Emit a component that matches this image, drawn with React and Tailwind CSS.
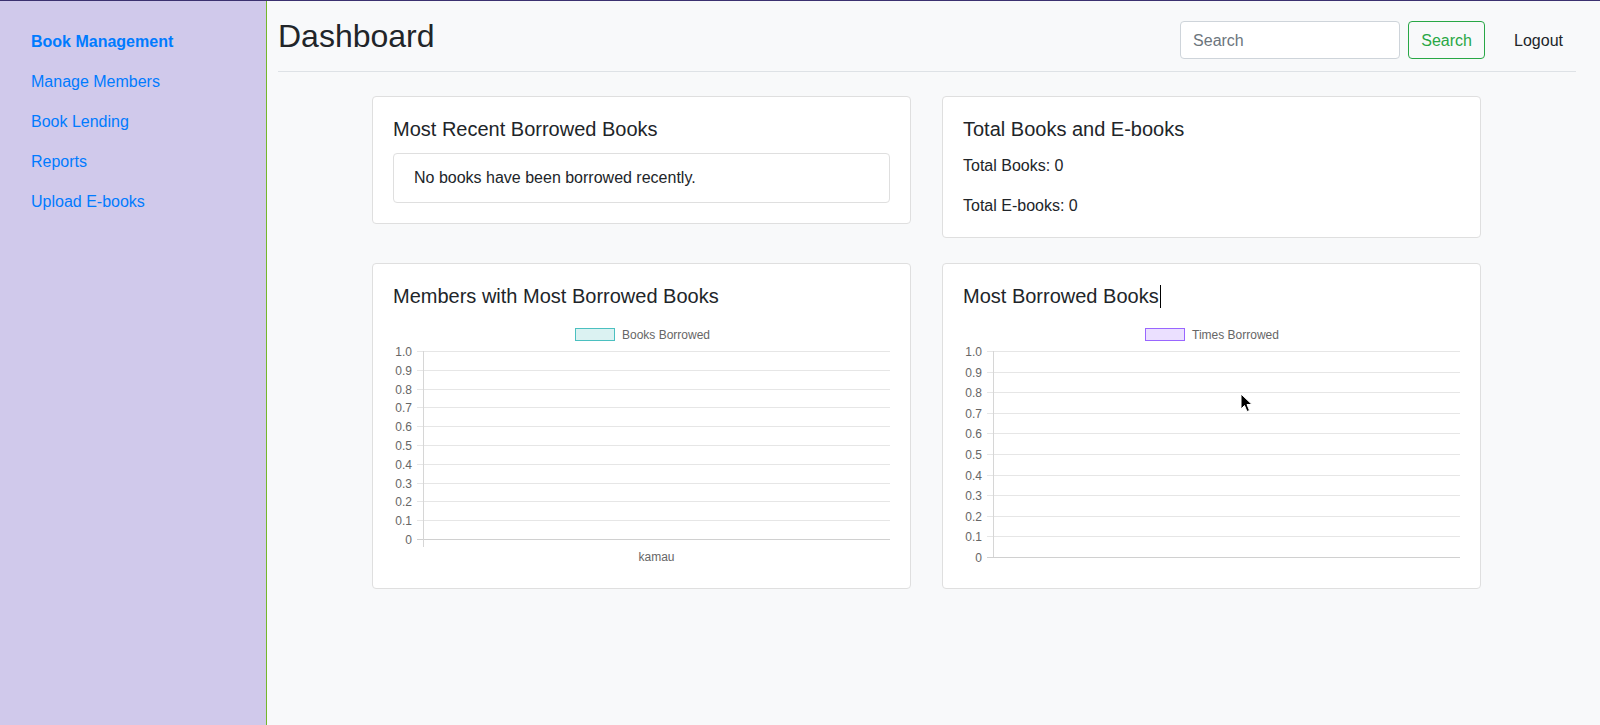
import React from "react";

const FONT = "'Liberation Sans', Arial, sans-serif";

function Chart({ legend, stroke, fill, bottom, xLabel, textW }) {
  const W = 497;
  const H = 248;
  const top = 31;
  const left = 30;
  const legendW = 40 + 10 + textW;
  const lx = W / 2 - legendW / 2 + 2;
  const lines = [];
  for (let i = 0; i <= 10; i++) {
    const y = top + (i * (bottom - top)) / 10;
    const v = 1 - i / 10;
    const label = i === 10 ? "0" : v.toFixed(1);
    lines.push(
      <g key={i}>
        <line
          x1={24}
          x2={W}
          y1={Math.round(y) + 0.5}
          y2={Math.round(y) + 0.5}
          stroke={i === 10 ? "#d0d0d0" : "#e6e6e6"}
          strokeWidth="1"
        />
        <text x={19} y={Math.round(y) + 4.5} textAnchor="end" fontSize="12" fill="#666" fontFamily={FONT}>
          {label}
        </text>
      </g>
    );
  }
  return (
    <svg width={W} height={H} viewBox={`0 0 ${W} ${H}`} className="block">
      <rect x={Math.round(lx) + 0.5} y={8.5} width={39} height={12} fill={fill} stroke={stroke} strokeWidth="1" />
      <text x={Math.round(lx) + 47} y={18.5} fontSize="12" fill="#666" fontFamily={FONT}>
        {legend}
      </text>
      {lines}
      <line
        x1={left + 0.5}
        x2={left + 0.5}
        y1={top}
        y2={xLabel ? bottom + 8 : bottom}
        stroke="#d6d6d6"
        strokeWidth="1"
      />
      {xLabel && (
        <text x={(left + W) / 2} y={241} textAnchor="middle" fontSize="12" fill="#666" fontFamily={FONT}>
          {xLabel}
        </text>
      )}
    </svg>
  );
}

export default function App() {
  const links = ["Book Management", "Manage Members", "Book Lending", "Reports", "Upload E-books"];
  return (
    <div className="relative flex min-h-[725px] border-t border-[#3b3170] font-['Liberation_Sans',Arial,sans-serif] text-[#212529]">
      <aside className="w-[267px] shrink-0 bg-[#d0c9eb] border-r border-[#74b72a]">
        <nav className="flex flex-col pt-[21px]">
          {links.map((l, i) => (
            <a
              key={l}
              href="#"
              className={`pl-[31px] py-2 text-[16px] leading-[24px] text-[#007bff] ${i === 0 ? "font-bold" : ""}`}
            >
              {l}
            </a>
          ))}
        </nav>
      </aside>
      <main className="flex-1 bg-[#f8f9fa] pl-[11px] pr-[24px]">
        <header className="flex items-start justify-between pt-[20px] pb-[12px] border-b border-[#dee2e6]">
          <h1 className="mt-[-4px] text-[32px] leading-[38px] font-normal">Dashboard</h1>
          <div className="flex items-center">
            <input
              type="text"
              placeholder="Search"
              className="w-[220px] h-[38px] px-3 pt-[2px] bg-white border border-[#ced4da] rounded-[4px] text-[16px] placeholder:text-[#6c757d] outline-none"
            />
            <button className="ml-2 w-[77px] h-[38px] pt-[2px] border border-[#28a745] text-[#28a745] rounded-[4px] text-[16px] bg-transparent">
              Search
            </button>
            <a href="#" className="ml-[29px] mr-[13px] mt-[2px] text-[16px] leading-[24px] text-[#212529]">
              Logout
            </a>
          </div>
        </header>
        <div className="ml-[94px] mt-[24px] grid grid-cols-[539px_539px] gap-x-[31px] gap-y-[25px] items-start">
          <div className="bg-white border border-[#dfdfdf] rounded-[4px] p-5">
            <h5 className="text-[20px] leading-[24px] mb-3">Most Recent Borrowed Books</h5>
            <div className="border border-[#dfdfdf] rounded-[4px] px-5 py-3 text-[16px] leading-[24px]">
              No books have been borrowed recently.
            </div>
          </div>
          <div className="bg-white border border-[#dfdfdf] rounded-[4px] px-5 pt-5 pb-[19px]">
            <h5 className="text-[20px] leading-[24px] mb-[13px]">Total Books and E-books</h5>
            <p className="text-[16px] leading-[24px] mb-4">Total Books: 0</p>
            <p className="text-[16px] leading-[24px]">Total E-books: 0</p>
          </div>
          <div className="bg-white border border-[#dfdfdf] rounded-[4px] p-5">
            <h5 className="text-[20px] leading-[24px] mb-3">Members with Most Borrowed Books</h5>
            <Chart
              legend="Books Borrowed"
              stroke="rgb(75,192,192)"
              fill="rgba(75,192,192,0.2)"
              bottom={219}
              xLabel="kamau"
              textW={88}
            />
          </div>
          <div className="bg-white border border-[#dfdfdf] rounded-[4px] p-5">
            <h5 className="text-[20px] leading-[24px] mb-3 flex items-center">
              Most Borrowed Books
              <span className="inline-block w-px h-[23px] bg-black ml-[1px]" />
            </h5>
            <Chart
              legend="Times Borrowed"
              stroke="rgb(153,102,255)"
              fill="rgba(153,102,255,0.2)"
              bottom={237}
              textW={87}
            />
          </div>
        </div>
      </main>
      <svg className="absolute left-[1240px] top-[392px] pointer-events-none" width="14" height="22" viewBox="0 0 14 22">
        <path
          d="M1 1 L1 16 L4.5 12.5 L7 18.5 L9.5 17.5 L7 11.5 L12 11.5 Z"
          fill="#000"
          stroke="#fff"
          strokeWidth="1"
          strokeLinejoin="round"
        />
      </svg>
    </div>
  );
}
